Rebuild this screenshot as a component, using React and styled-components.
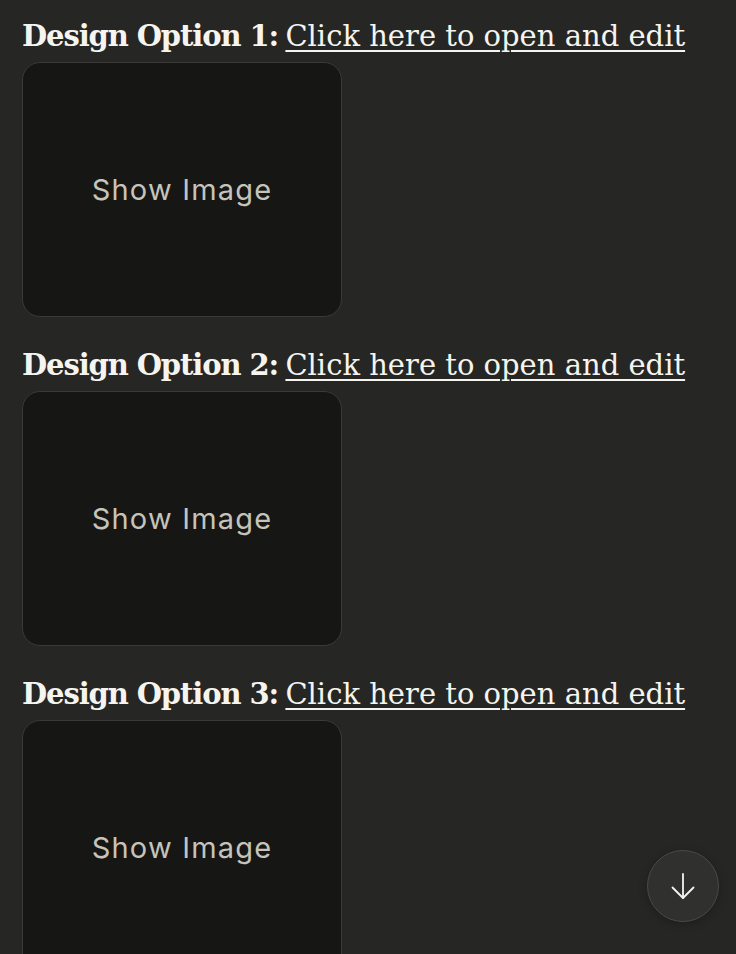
import React from "react";
import styled, { createGlobalStyle } from "styled-components";

const Global = createGlobalStyle`
  html, body { margin: 0; padding: 0; background: #262624; }
  body { overflow: hidden; }
`;

const Page = styled.div`
  width: 736px;
  height: 954px;
  overflow: hidden;
  background: #262624;
  padding: 16px 22px 0;
  box-sizing: border-box;
  display: flex;
  flex-direction: column;
  gap: 28px;
  position: relative;
`;

const Section = styled.section`
  display: flex;
  flex-direction: column;
  gap: 6px;
`;

const Heading = styled.h2`
  margin: 0;
  font-family: "DejaVu Serif", "Liberation Serif", serif;
  font-size: 29px;
  line-height: 40px;
  color: #f5f4ef;
  font-weight: 400;
  white-space: nowrap;
`;

const Label = styled.strong`
  font-weight: 700;
  letter-spacing: -1.1px;
  margin-right: -2px;
`;

const Link = styled.a`
  color: #f5f4ef;
  letter-spacing: 0;
  text-decoration: underline;
  text-decoration-thickness: 2px;
  text-underline-offset: 4px;
  cursor: pointer;
`;

const ImageBox = styled.div`
  width: 320px;
  height: 255px;
  box-sizing: border-box;
  border: 1.5px solid #3a3a38;
  border-radius: 18px;
  background: #161615;
  display: flex;
  align-items: center;
  justify-content: center;
  flex-shrink: 0;
`;

const ShowText = styled.span`
  font-family: Inter, "Noto Sans", sans-serif;
  font-size: 29px;
  color: #c6c4ba;
  letter-spacing: 1.2px;
`;

const ScrollButton = styled.button`
  position: absolute;
  left: 647px;
  top: 850px;
  width: 72px;
  height: 72px;
  border-radius: 50%;
  border: 1px solid #4a4a47;
  background: #30302e;
  display: flex;
  align-items: center;
  justify-content: center;
  padding: 0;
  box-shadow: 0 2px 8px rgba(0, 0, 0, 0.25);
`;

const options = [1, 2, 3];

export default function App() {
  return (
    <>
      <Global />
      <Page>
        {options.map((n) => (
          <Section key={n}>
            <Heading>
              <Label>Design Option {n}:</Label> <Link>Click here to open and edit</Link>
            </Heading>
            <ImageBox>
              <ShowText>Show Image</ShowText>
            </ImageBox>
          </Section>
        ))}
        <ScrollButton aria-label="Scroll down">
          <svg width="28" height="30" viewBox="0 0 28 30" fill="none" stroke="#f5f4ef" strokeWidth="1.8" strokeLinecap="round" strokeLinejoin="round">
            <path d="M14 3 V27" />
            <path d="M3.5 16.5 L14 27 L24.5 16.5" />
          </svg>
        </ScrollButton>
      </Page>
    </>
  );
}
